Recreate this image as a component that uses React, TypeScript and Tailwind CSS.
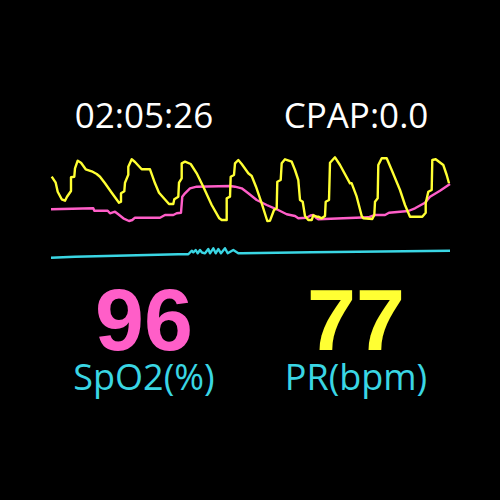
const pleth =
  '51.7,176.7 55.7,182.7 57.7,191.7 61.7,199.3 65,200.7 67,196.7 71,191 71,177.3 74.3,176.7 75,168.3 77.7,160.7 81,162.7 85.7,169.3 91.7,171.3 96.7,174 100,176.7 105,183.3 111.7,192.7 119,202.7 121,201.7 121,193.3 124.3,191.3 125,182.7 128.3,174.7 128.3,166.7 131.7,159.3 135,162 141.7,169.3 150,169.3 155,183.3 159,192.7 169,204 173.3,204 174.3,199.3 178.3,196.7 179,182.7 181.7,178.3 181.7,163.3 185,161.7 190.7,164 196.7,173.3 203.3,186.7 211.7,205 219.3,218.3 221.7,220 226.7,220 226.7,198.3 230,196.7 230.7,176.7 234,175 235,163.3 238.3,160 241.7,164 248.3,173.3 251.7,176 256,186.7 261.7,203.3 267.3,221 270,220.7 274,210 276.7,208.3 277.3,181.7 280.7,180 281.7,163.3 285,159.3 291.7,161.7 295,170 298.3,180 300,200 302.7,201.7 305,216 308.3,220 311.7,220 313.3,215.3 316.7,216.7 318.3,216.7 321.7,218.3 325,216 325.7,201.7 329,200 330,162.7 335,157.3 340,165 350,183.3 351.7,183.3 356.7,196.7 361.7,216 363.3,218.3 372.3,219 374.3,215 375,201.7 377.7,198.3 378.3,165 381.7,158.3 386.7,158.3 391.7,170 400,190 405,205 410,216.7 422.3,216.7 425.7,212.7 425.7,203.3 428.3,191.7 431.7,190 432.3,160 435.7,159.3 443.3,165 446.7,175 449,183.3'

const trend =
  '51,209.3 93.3,208.3 94.3,210.7 107.7,210.7 110,213.3 115,211.7 118.3,214.3 123.3,218.3 129,221 132.3,220 135,217.7 160,217.7 165,215 173.3,215 176.7,213.3 181,212.7 182.3,196.7 185,193.3 190,188.3 196.7,186.7 230,186 235,186.7 241.7,188.3 248.3,193.3 256.7,200 266.7,205 276.7,209.3 286.7,214.3 295,216 298.3,218.3 306.7,217.7 310.5,215.5 313.3,215 316.7,218.3 318.3,219.3 368.3,217.3 375,215 385,215 389,212.7 408.3,211 415,208.3 425,202.7 430,196.7 440,190.7 450,184'

const resp =
  '51,257.7 75,256.7 178.3,254.3 188.3,254.3 191.7,250.7 193.3,252.3 195.7,250 197.7,253.3 200,250 202,252.5 205,253.3 208.3,249 210,253.3 213.3,248.3 215.7,253.3 218.3,249 221,253.3 225,248.3 227.7,253.3 233.3,250 238.3,253.3 241.7,253.3 311.7,252.3 450,250.7'

export default function App() {
  return (
    <div className="w-[500px] h-[500px] bg-black overflow-hidden" style={{ fontFamily: '"Open Sans", sans-serif' }}>
      <div className="grid grid-cols-2 px-[38px] pt-[97px] text-white text-[35px] leading-none">
        <div className="text-center">02:05:26</div>
        <div className="text-center">CPAP:0.0</div>
      </div>

      {/* waveforms */}
      <svg className="block mt-[18px]" width="500" height="110" viewBox="0 150 500 110" fill="none">
        <polyline points={trend} stroke="#ff5ec8" strokeWidth="2.4" strokeLinejoin="round" />
        <polyline points={pleth} stroke="#ffff33" strokeWidth="2.4" strokeLinejoin="round" />
        <polyline points={resp} stroke="#3ad6e4" strokeWidth="2.4" strokeLinejoin="round" />
      </svg>

      <div
        className="grid grid-cols-2 px-[38px] mt-[25px] text-[88px] leading-[70px] font-bold"
        style={{ fontFamily: '"Liberation Sans", Arial, sans-serif' }}
      >
        <div className="text-center text-[#ff5ec8]">96</div>
        <div className="text-center text-[#ffff33]">77</div>
      </div>

      <div className="grid grid-cols-2 px-[38px] mt-[4px] text-[36px] leading-[36px] text-[#3ad6e4]">
        <div className="text-center">SpO2(%)</div>
        <div className="text-center">PR(bpm)</div>
      </div>
    </div>
  )
}
